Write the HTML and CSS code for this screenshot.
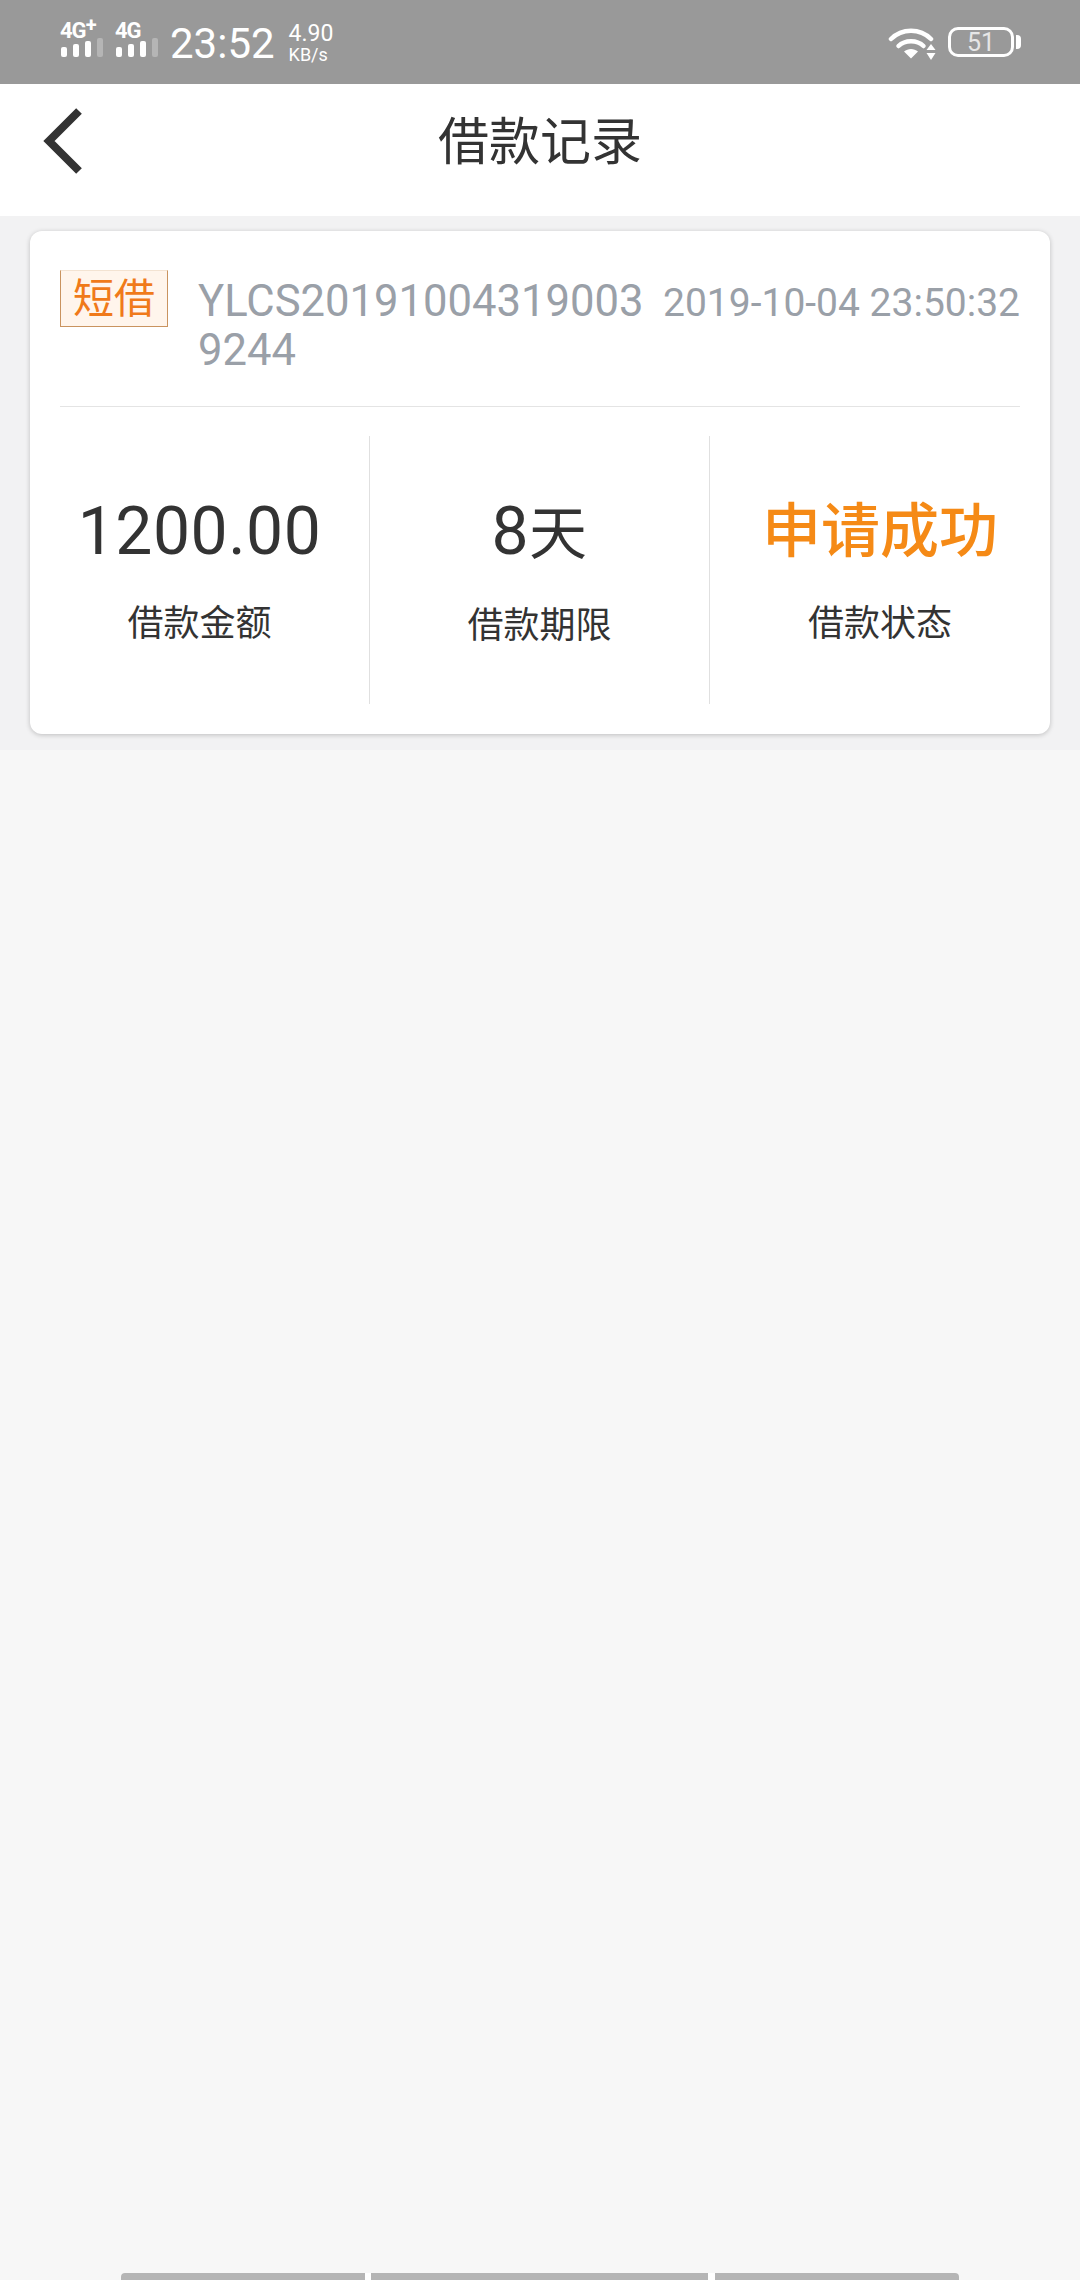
FILE: index.html
```html
<!DOCTYPE html>
<html lang="zh-CN">
<head>
  <meta charset="UTF-8">
  <meta name="viewport" content="width=device-width, initial-scale=1.0">
  <title>借款记录</title>
  <link rel="stylesheet" href="styles.css">
</head>
<body>
  <div class="page">
    <header class="status-bar">
      <div class="status-left">
        <div class="sim sim-first">
          <span class="sim-label">4G<sup>+</sup></span>
          <svg class="bars" width="44" height="20" viewBox="0 0 44 20">
            <rect x="1" y="9" width="6" height="10" rx="2" fill="#fff"/>
            <rect x="13" y="6" width="6" height="13" rx="2" fill="#fff"/>
            <rect x="25" y="3" width="6" height="16" rx="2" fill="#fff"/>
            <rect x="37" y="0" width="6" height="19" rx="2" fill="#b5b5b5"/>
          </svg>
        </div>
        <div class="sim">
          <span class="sim-label">4G</span>
          <svg class="bars" width="44" height="20" viewBox="0 0 44 20">
            <rect x="1" y="9" width="6" height="10" rx="2" fill="#fff"/>
            <rect x="13" y="6" width="6" height="13" rx="2" fill="#fff"/>
            <rect x="25" y="3" width="6" height="16" rx="2" fill="#fff"/>
            <rect x="37" y="0" width="6" height="19" rx="2" fill="#b5b5b5"/>
          </svg>
        </div>
        <span class="clock">23:52</span>
        <div class="speed">
          <span class="speed-value">4.90</span>
          <span class="speed-unit">KB/s</span>
        </div>
      </div>
      <div class="status-right">
        <svg class="wifi" width="48" height="34" viewBox="0 0 48 34">
          <path d="M3 12 C14 1 32 1 43 12" fill="none" stroke="#fff" stroke-width="4.5" stroke-linecap="round"/>
          <path d="M10.5 19 C17 12.5 29 12.5 35.5 19" fill="none" stroke="#fff" stroke-width="4.5" stroke-linecap="round"/>
          <path d="M16 24.5 C20 21 26 21 30 24.5 L23 31.5 Z" fill="#fff"/>
          <path d="M43 17 L47.5 23 H38.5 Z" fill="#fff"/>
          <path d="M43 33 L47.5 26 H38.5 Z" fill="#fff"/>
        </svg>
        <div class="battery"><span class="battery-level">51</span></div>
        <div class="battery-nub"></div>
      </div>
    </header>

    <nav class="nav-bar">
      <svg class="back" width="48" height="70" viewBox="0 0 48 70">
        <path d="M39 5 L9 35 L39 65" fill="none" stroke="#333" stroke-width="8"/>
      </svg>
      <h1 class="nav-title">借款记录</h1>
    </nav>

    <section class="records">
      <div class="record-card">
        <div class="record-head">
          <span class="record-tag">短借</span>
          <div class="record-meta">
            <span class="record-id">YLCS201910043190039244</span>
            <span class="record-date">2019-10-04 23:50:32</span>
          </div>
        </div>
        <div class="record-stats">
          <div class="stat">
            <div class="stat-value">1200.00</div>
            <div class="stat-label">借款金额</div>
          </div>
          <div class="stat">
            <div class="stat-value">8<span class="stat-unit">天</span></div>
            <div class="stat-label">借款期限</div>
          </div>
          <div class="stat">
            <div class="stat-value stat-success">申请成功</div>
            <div class="stat-label">借款状态</div>
          </div>
        </div>
      </div>
    </section>

    <div class="page-rest">
      <div class="home-strip">
        <span class="strip-part strip-left"></span>
        <span class="strip-part strip-middle"></span>
        <span class="strip-part strip-right"></span>
      </div>
    </div>
  </div>
</body>
</html>
```

FILE: styles.css
```css
body {
  margin: 0;
  font-family: Roboto, "Noto Sans CJK SC", sans-serif;
  color: #333;
}
.page {
  display: flex;
  flex-direction: column;
  height: 2280px;
  background-color: #f7f7f7;
}

/* status bar */
.status-bar {
  display: flex;
  justify-content: space-between;
  height: 84px;
  background-color: #999;
  color: #fff;
}
.status-left {
  display: flex;
  padding-left: 60px;
}
.sim {
  display: flex;
  flex-direction: column;
  width: 44px;
  padding-top: 20px;
}
.sim-first {
  margin-right: 11px;
}
.sim-label {
  height: 18px;
  font-size: 22px;
  line-height: 21px;
  font-weight: bold;
  letter-spacing: -1px;
}
.sim-label sup {
  font-size: 20px;
  line-height: 0;
  vertical-align: 6px;
}
.bars {
  display: block;
}
.clock {
  margin-left: 11px;
  font-size: 42px;
  line-height: 88px;
}
.speed {
  display: flex;
  flex-direction: column;
  margin-left: 14px;
  padding-top: 23px;
}
.speed-value {
  font-size: 23px;
  line-height: 22px;
}
.speed-unit {
  font-size: 18px;
  line-height: 19px;
}
.status-right {
  display: flex;
  align-items: flex-start;
  padding: 27px 59px 0 0;
}
.wifi {
  margin-right: 12px;
}
.battery {
  display: flex;
  align-items: center;
  justify-content: center;
  box-sizing: border-box;
  width: 66px;
  height: 30px;
  border: 3px solid #fff;
  border-radius: 10px;
}
.battery-level {
  font-size: 25px;
  color: #e6e6e6;
}
.battery-nub {
  width: 5px;
  height: 14px;
  margin: 8px 0 0 2px;
  border-radius: 0 4px 4px 0;
  background-color: #fff;
}

/* title */
.nav-bar {
  position: relative;
  display: flex;
  align-items: center;
  justify-content: center;
  box-sizing: border-box;
  height: 132px;
  padding-bottom: 14px;
  background-color: #fff;
}
.back {
  position: absolute;
  left: 40px;
  top: 22px;
}
.nav-title {
  margin: 0;
  font-size: 51px;
  font-weight: normal;
  line-height: 60px;
}

/* record list */
.records {
  padding: 15px 30px 16px;
  background-color: #f2f2f3;
}
.record-card {
  box-sizing: border-box;
  height: 503px;
  padding-top: 39px;
  border-radius: 12px;
  background-color: #fff;
  box-shadow: 0 1px 5px rgba(0, 0, 0, 0.22);
}
.record-head {
  display: flex;
  align-items: flex-start;
  height: 136px;
  margin: 0 30px;
  border-bottom: 1px solid #e4e4e4;
}
.record-tag {
  box-sizing: border-box;
  flex-shrink: 0;
  width: 108px;
  height: 57px;
  border: 1px solid #c9935f;
  border-top-color: #f3e3d2;
  background-color: #fff5ec;
  color: #f07a1a;
  font-size: 41px;
  line-height: 56px;
  text-align: center;
}
.record-meta {
  display: flex;
  flex: 1;
  align-items: baseline;
  min-width: 0;
  margin-left: 30px;
  padding-top: 7px;
  color: #9aa0a8;
}
.record-id {
  flex: 1;
  min-width: 0;
  font-size: 43.6px;
  line-height: 49px;
  word-break: break-all;
}
.record-date {
  flex-shrink: 0;
  margin-left: 10px;
  font-size: 39px;
}
.record-stats {
  display: grid;
  grid-template-columns: repeat(3, 1fr);
  height: 268px;
  margin-top: 29px;
}
.stat {
  padding-top: 56px;
  text-align: center;
}
.stat:not(:last-child) {
  border-right: 1px solid #e0e0e0;
}
.stat-value {
  font-size: 66px;
  line-height: 80px;
  letter-spacing: 0.5px;
}
.stat-unit {
  font-size: 58px;
}
.stat-success {
  color: #f58a16;
  font-size: 59px;
  font-weight: 500;
  letter-spacing: 0;
}
.stat-label {
  margin-top: 27px;
  font-size: 36px;
  line-height: 50px;
}

/* the part of the page below the card */
.page-rest {
  display: flex;
  flex: 1;
  align-items: flex-end;
  justify-content: center;
}
.home-strip {
  display: flex;
  gap: 6px;
  border-radius: 4px 4px 0 0;
  background-color: #fff;
}
.strip-part {
  height: 7px;
  background-color: #b5b5b5;
}
.strip-left {
  width: 244px;
  border-top-left-radius: 4px;
}
.strip-middle {
  width: 337px;
}
.strip-right {
  width: 244px;
  margin-left: 1px;
  border-top-right-radius: 4px;
}
```
